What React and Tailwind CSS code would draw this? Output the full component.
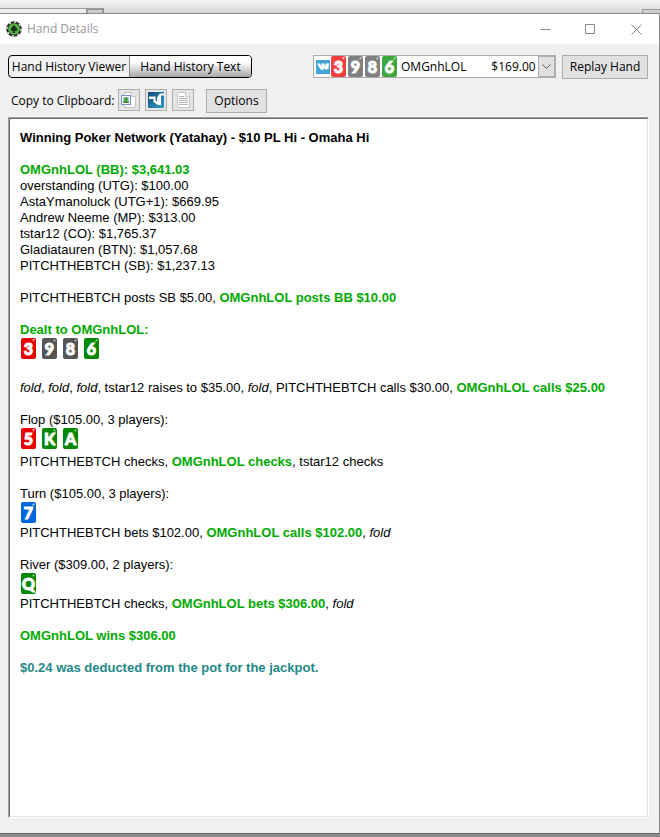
import { useState } from 'react'

const CARD_COLORS = {
  heart: 'bg-[#e60000]',
  spade: 'bg-[#555555]',
  club: 'bg-[#008800]',
  diamond: 'bg-[#0066dd]',
}

const PICKER_COLORS = {
  heart: 'bg-[#ee4040]',
  spade: 'bg-[#808080]',
  club: 'bg-[#40a640]',
  diamond: 'bg-[#408ce6]',
}

const SUIT_PATHS = {
  heart: 'M0 0h4L2 4z',
  spade: 'M2 0l2 3H0z',
  club: 'M2 0l2 3H0z',
  diamond: 'M2 0l2 2-2 2-2-2z',
}

const HOLE_CARDS = [
  { rank: '3', suit: 'heart' },
  { rank: '9', suit: 'spade' },
  { rank: '8', suit: 'spade' },
  { rank: '6', suit: 'club' },
]

const FLOP = [
  { rank: '5', suit: 'heart' },
  { rank: 'K', suit: 'club' },
  { rank: 'A', suit: 'club' },
]

const SEATS = [
  'overstanding (UTG): $100.00',
  'AstaYmanoluck (UTG+1): $669.95',
  'Andrew Neeme (MP): $313.00',
  'tstar12 (CO): $1,765.37',
  'Gladiatauren (BTN): $1,057.68',
  'PITCHTHEBTCH (SB): $1,237.13',
]

// Non-breaking spaces keep the name and the pot apart inside the option
const PLAYER_OPTION = 'OMGnhLOL' + '\u00a0'.repeat(8) + '$169.00'

function Card({ rank, suit, colors = CARD_COLORS }) {
  return (
    <span
      className={`relative flex h-[21px] w-[15px] justify-center rounded-xs pt-px font-['Lato',sans-serif] text-[16px] leading-5 font-black text-white [-webkit-text-stroke:1px_white] ${colors[suit]}`}
    >
      {rank}
      <svg viewBox="0 0 4 4" className="absolute top-px right-px size-[3px] fill-white/60">
        <path d={SUIT_PATHS[suit]} />
      </svg>
    </span>
  )
}

function CardRow({ cards, className }) {
  return (
    <div className={`flex gap-1.5 pl-px ${className}`}>
      {cards.map((c) => (
        <Card key={c.rank + c.suit} {...c} />
      ))}
    </div>
  )
}

function Hero({ children }) {
  return <b className="text-[#00aa00]">{children}</b>
}

function ChipIcon() {
  return (
    <svg viewBox="0 0 16 16" className="size-4">
      <circle cx="8" cy="8" r="7.8" fill="#2a2a2a" />
      <circle cx="8" cy="8" r="7" fill="none" stroke="#e8e8e8" strokeWidth="1.6" strokeDasharray="2 3.5" />
      <circle cx="8" cy="8" r="5.8" fill="#55b540" />
      <path
        d="M8 3.800C7.500 5.200 4.800 6.600 4.800 8.500c0 1.600 1.900 1.900 2.700.9L6.600 12h2.800l-.9-2.600c.8 1 2.700.7 2.700-.9C11.200 6.600 8.500 5.200 8 3.800z"
        fill="#12301a"
      />
    </svg>
  )
}

function NetworkIcon() {
  return (
    <svg viewBox="0 0 14 14" className="size-3.5">
      <rect width="14" height="14" fill="#42a5d6" />
      <path d="M1 3.500h3l1.500 3V3.500h2.500l1.500 3V3.500H13l-.5 5-2.500 1.500-2-2-.5 2L4.500 9.500z" fill="#fff" />
    </svg>
  )
}

function ImagePageIcon() {
  return (
    <svg viewBox="0 0 18 18" className="size-[18px]">
      <path d="M4.500 1.500h7l4 4v11h-11z" fill="#fff" stroke="#c6c6c6" />
      <path d="M11.500 1.500v4h4" fill="#eee" stroke="#c6c6c6" />
      <rect x="1.500" y="4.500" width="9" height="9" fill="#fff" stroke="#7393c8" />
      <rect x="3" y="6" width="6" height="6" fill="#a9c8ee" />
      <path d="M3 10.500h6V12H3z" fill="#3d8a2a" />
      <circle cx="6" cy="8.300" r="2" fill="#49a52c" />
      <path d="M5.500 9.500h1v2h-1z" fill="#3d6a2a" />
    </svg>
  )
}

function TwoPlusTwoIcon() {
  return (
    <svg viewBox="0 0 18 18" className="size-[18px]">
      <defs>
        <linearGradient id="forum" x1="0" y1="0" x2="1" y2="1">
          <stop offset="0" stopColor="#154a78" />
          <stop offset="1" stopColor="#2f9fc6" />
        </linearGradient>
      </defs>
      <rect x="1" y="1" width="16" height="16" fill="url(#forum)" />
      <path d="M2 5.500h6.500v4L10 10.500V6.500L13 2.500H17V4.500h-3V14h-3L6.500 11V8H2z" fill="#fff" />
    </svg>
  )
}

function TextPageIcon() {
  return (
    <svg viewBox="0 0 18 18" className="size-[18px]">
      <path d="M3.500 1.500h8l4 4v11h-12z" fill="#fff" stroke="#c6c6c6" />
      <path d="M11.500 1.500v4h4" fill="#eee" stroke="#c6c6c6" />
      <path d="M5 5.500h5M5 7.500h9M5 9.500h9M5 11.500h9M5 13.500h9" stroke="#b4b4b4" />
    </svg>
  )
}

function IconButton({ label, children }) {
  return (
    <button
      type="button"
      aria-label={label}
      className="flex size-[22px] items-center justify-center border border-[#adadad] bg-[#e5e5e5]"
    >
      {children}
    </button>
  )
}

function TitleBar() {
  return (
    <header className="flex h-[30px] items-center bg-white pl-1.5">
      <ChipIcon />
      <h1 className="ml-[5px] flex-1 text-[#999]">Hand Details</h1>
      <div className="flex h-full text-[#888]">
        <button type="button" aria-label="Minimize" className="flex w-[45px] items-center justify-center">
          <svg viewBox="0 0 11 11" className="size-[11px]" stroke="currentColor" fill="none">
            <path d="M.5 5.500h10" />
          </svg>
        </button>
        <button type="button" aria-label="Maximize" className="flex w-[45px] items-center justify-center">
          <svg viewBox="0 0 11 11" className="size-[11px]" stroke="currentColor" fill="none">
            <path d="M.5.5h9v9h-9z" />
          </svg>
        </button>
        <button type="button" aria-label="Close" className="flex w-[46px] items-center justify-center">
          <svg viewBox="0 0 11 11" className="size-[11px]" stroke="currentColor" fill="none">
            <path d="M.5.5l10 10M10.500.5l-10 10" />
          </svg>
        </button>
      </div>
    </header>
  )
}

function PlayerPicker() {
  return (
    <div className="relative flex h-[23px] w-[243px] border border-[#adadad] bg-white">
      <label htmlFor="player" className="flex items-center gap-px pl-0.5" aria-label="Player">
        <NetworkIcon />
        <span className="flex gap-0.5">
          {HOLE_CARDS.map((c) => (
            <Card key={c.rank} {...c} colors={PICKER_COLORS} />
          ))}
        </span>
      </label>
      <select id="player" className="h-full min-w-0 flex-1 appearance-none bg-transparent pl-1">
        <option>{PLAYER_OPTION}</option>
      </select>
      <div className="pointer-events-none absolute inset-y-0 right-0 flex w-[17px] items-center justify-center border border-[#adadad] bg-[#e1e1e1]">
        <svg viewBox="0 0 9 6" className="h-1.5 w-[9px]" fill="none" stroke="#555">
          <path d="M.5.5l4 4 4-4" />
        </svg>
      </div>
    </div>
  )
}

function HandText() {
  return (
    <article className="flex flex-1 flex-col border border-t-[#a0a0a0] border-r-white border-b-white border-l-[#a0a0a0] bg-white">
      <div className="flex-1 border border-t-[#696969] border-r-[#e3e3e3] border-b-[#e3e3e3] border-l-[#696969] px-2.5 py-[11px] font-['Liberation_Sans',Arial,sans-serif] text-[13px] leading-4">
        <h2 className="font-bold">Winning Poker Network (Yatahay) - $10 PL Hi - Omaha Hi</h2>

        <div className="mt-4">
          <p><Hero>OMGnhLOL (BB): $3,641.03</Hero></p>
          {SEATS.map((seat) => (
            <p key={seat}>{seat}</p>
          ))}
        </div>

        <p className="mt-4">PITCHTHEBTCH posts SB $5.00, <Hero>OMGnhLOL posts BB $10.00</Hero></p>

        <div className="mt-4">
          <p><Hero>Dealt to OMGnhLOL:</Hero></p>
          <CardRow cards={HOLE_CARDS} className="h-[26px]" />
        </div>

        <p className="mt-4">
          <i>fold</i>, <i>fold</i>, <i>fold</i>, tstar12 raises to $35.00, <i>fold</i>, PITCHTHEBTCH calls $30.00,{' '}
          <Hero>OMGnhLOL calls $25.00</Hero>
        </p>

        <div className="mt-4">
          <p>Flop ($105.00, 3 players):</p>
          <CardRow cards={FLOP} className="h-[26px]" />
          <p>PITCHTHEBTCH checks, <Hero>OMGnhLOL checks</Hero>, tstar12 checks</p>
        </div>

        <div className="mt-4">
          <p>Turn ($105.00, 3 players):</p>
          <CardRow cards={[{ rank: '7', suit: 'diamond' }]} className="h-[23px]" />
          <p>PITCHTHEBTCH bets $102.00, <Hero>OMGnhLOL calls $102.00</Hero>, <i>fold</i></p>
        </div>

        <div className="mt-4">
          <p>River ($309.00, 2 players):</p>
          <CardRow cards={[{ rank: 'Q', suit: 'club' }]} className="h-[23px]" />
          <p>PITCHTHEBTCH checks, <Hero>OMGnhLOL bets $306.00</Hero>, <i>fold</i></p>
        </div>

        <p className="mt-4"><Hero>OMGnhLOL wins $306.00</Hero></p>
        <p className="mt-4 font-bold text-[#228888]">$0.24 was deducted from the pot for the jackpot.</p>
      </div>
    </article>
  )
}

export default function App() {
  const [tab, setTab] = useState('text')

  return (
    <div className="flex min-h-screen flex-col bg-[#8c8c8c] font-['Open_Sans','Segoe_UI',sans-serif] text-[12px] leading-4 text-black">
      {/* Edge of the window behind */}
      <div className="flex h-[13px] items-end bg-linear-to-b from-[#f4f4f4] to-[#d6d6d6]">
        <div className="h-[5px] w-[86px] border-t border-[#a0a0a0] bg-[#eee]" />
        <div className="h-[5px] w-[18px] border-2 border-b-0 border-[#999] bg-[#ccc]" />
        <div className="ml-auto h-1 w-[18px] border-t border-l border-[#a0a0a0] bg-[#ccc]" />
      </div>

      <main className="mr-px flex flex-1 flex-col border-t border-b border-t-[#8a8a8a] border-b-[#666] bg-[#f0f0f0]">
        <TitleBar />

        <div className="flex items-start px-[11px] pt-[11px] pl-2">
          <div role="tablist" className="flex h-[23px] overflow-hidden rounded-sm border border-black">
            <button
              type="button"
              role="tab"
              aria-selected={tab === 'viewer'}
              onClick={() => setTab('viewer')}
              className="w-[121px] border-r border-[#888]"
            >
              Hand History Viewer
            </button>
            <button
              type="button"
              role="tab"
              aria-selected={tab === 'text'}
              onClick={() => setTab('text')}
              className="w-[121px] bg-linear-to-b from-white from-30% to-[#a8a8a8]"
            >
              Hand History Text
            </button>
          </div>
          <div className="ml-auto flex gap-1.5">
            <PlayerPicker />
            <button type="button" className="h-6 w-[86px] border border-[#adadad] bg-[#e1e1e1]">
              Replay Hand
            </button>
          </div>
        </div>

        <div className="mt-2.5 flex h-6 items-start pl-[11px]">
          <span className="w-[107px] self-center">Copy to Clipboard:</span>
          <div className="flex gap-[5px]">
            <IconButton label="Copy as image"><ImagePageIcon /></IconButton>
            <IconButton label="Copy for forum"><TwoPlusTwoIcon /></IconButton>
            <IconButton label="Copy as text"><TextPageIcon /></IconButton>
          </div>
          <button type="button" className="ml-3 h-6 w-[61px] border border-[#adadad] bg-[#e1e1e1]">
            Options
          </button>
        </div>

        <div className="flex flex-1 flex-col pt-1 pr-2.5 pb-[15px] pl-2">
          <HandText />
        </div>
      </main>

      <div className="h-[3px]" />
    </div>
  )
}
